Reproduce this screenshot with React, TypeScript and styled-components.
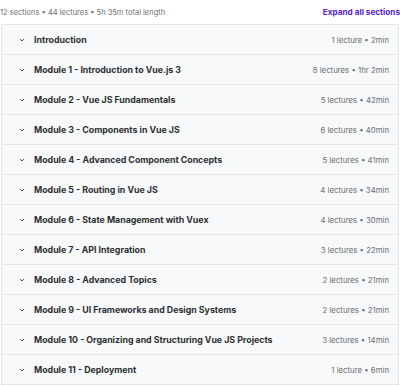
import styled, { createGlobalStyle } from 'styled-components';

const GlobalStyle = createGlobalStyle`
  body {
    margin: 0;
    background: #fff;
    font-family: Inter, "Noto Sans", sans-serif;
  }
`;

const sections = [
  { title: 'Introduction', meta: '1 lecture • 2min' },
  { title: 'Module 1 - Introduction to Vue.js 3', meta: '8 lectures • 1hr 2min' },
  { title: 'Module 2 - Vue JS Fundamentals', meta: '5 lectures • 42min' },
  { title: 'Module 3 - Components in Vue JS', meta: '6 lectures • 40min' },
  { title: 'Module 4 - Advanced Component Concepts', meta: '5 lectures • 41min' },
  { title: 'Module 5 - Routing in Vue JS', meta: '4 lectures • 34min' },
  { title: 'Module 6 - State Management with Vuex', meta: '4 lectures • 30min' },
  { title: 'Module 7 - API Integration', meta: '3 lectures • 22min' },
  { title: 'Module 8 - Advanced Topics', meta: '2 lectures • 21min' },
  { title: 'Module 9 - UI Frameworks and Design Systems', meta: '2 lectures • 21min' },
  { title: 'Module 10 - Organizing and Structuring Vue JS Projects', meta: '3 lectures • 14min' },
  { title: 'Module 11 - Deployment', meta: '1 lecture • 6min' },
];

const Curriculum = styled.div`
  width: 398px;
  padding-left: 1px;
`;

const Summary = styled.div`
  display: flex;
  justify-content: space-between;
  align-items: center;
  height: 24px;
  margin-right: -1px;

  .summary__text {
    font-size: 7.5px;
    color: #6a6f73;
    margin-left: -1px;
  }

  .summary__expand {
    font-size: 8.2px;
    font-weight: 700;
    color: #5624d0;
  }
`;

const SectionList = styled.div`
  border: 1px solid #e2e6e9;
  border-bottom: none;
`;

const SectionRow = styled.div`
  display: flex;
  align-items: center;
  height: 29px;
  padding: 0 9px 0 16px;
  background: #f7f9fa;
  border-bottom: 1px solid #e2e6e9;

  .section__chevron {
    width: 8px;
    height: 8px;
    margin-right: 8px;
    color: #2d2f31;
  }

  .section__title {
    flex: 1;
    font-size: 8.8px;
    font-weight: 700;
    color: #2d2f31;
  }

  .section__meta {
    font-size: 7.8px;
    color: #6a6f73;
  }
`;

const Chevron = () => (
  <svg className="section__chevron" viewBox="0 0 24 24" fill="none" stroke="currentColor" strokeWidth="2.5" strokeLinecap="round" strokeLinejoin="round">
    <path d="M7 10l5 5 5-5" />
  </svg>
);

const App = () => {
  return (
    <>
      <GlobalStyle />
      <Curriculum>
        <Summary>
          <span className="summary__text">12 sections • 44 lectures • 5h 35m total length</span>
          <span className="summary__expand">Expand all sections</span>
        </Summary>
        <SectionList>
          {sections.map((s) => (
            <SectionRow key={s.title}>
              <Chevron />
              <span className="section__title">{s.title}</span>
              <span className="section__meta">{s.meta}</span>
            </SectionRow>
          ))}
        </SectionList>
      </Curriculum>
    </>
  );
};

export default App;
